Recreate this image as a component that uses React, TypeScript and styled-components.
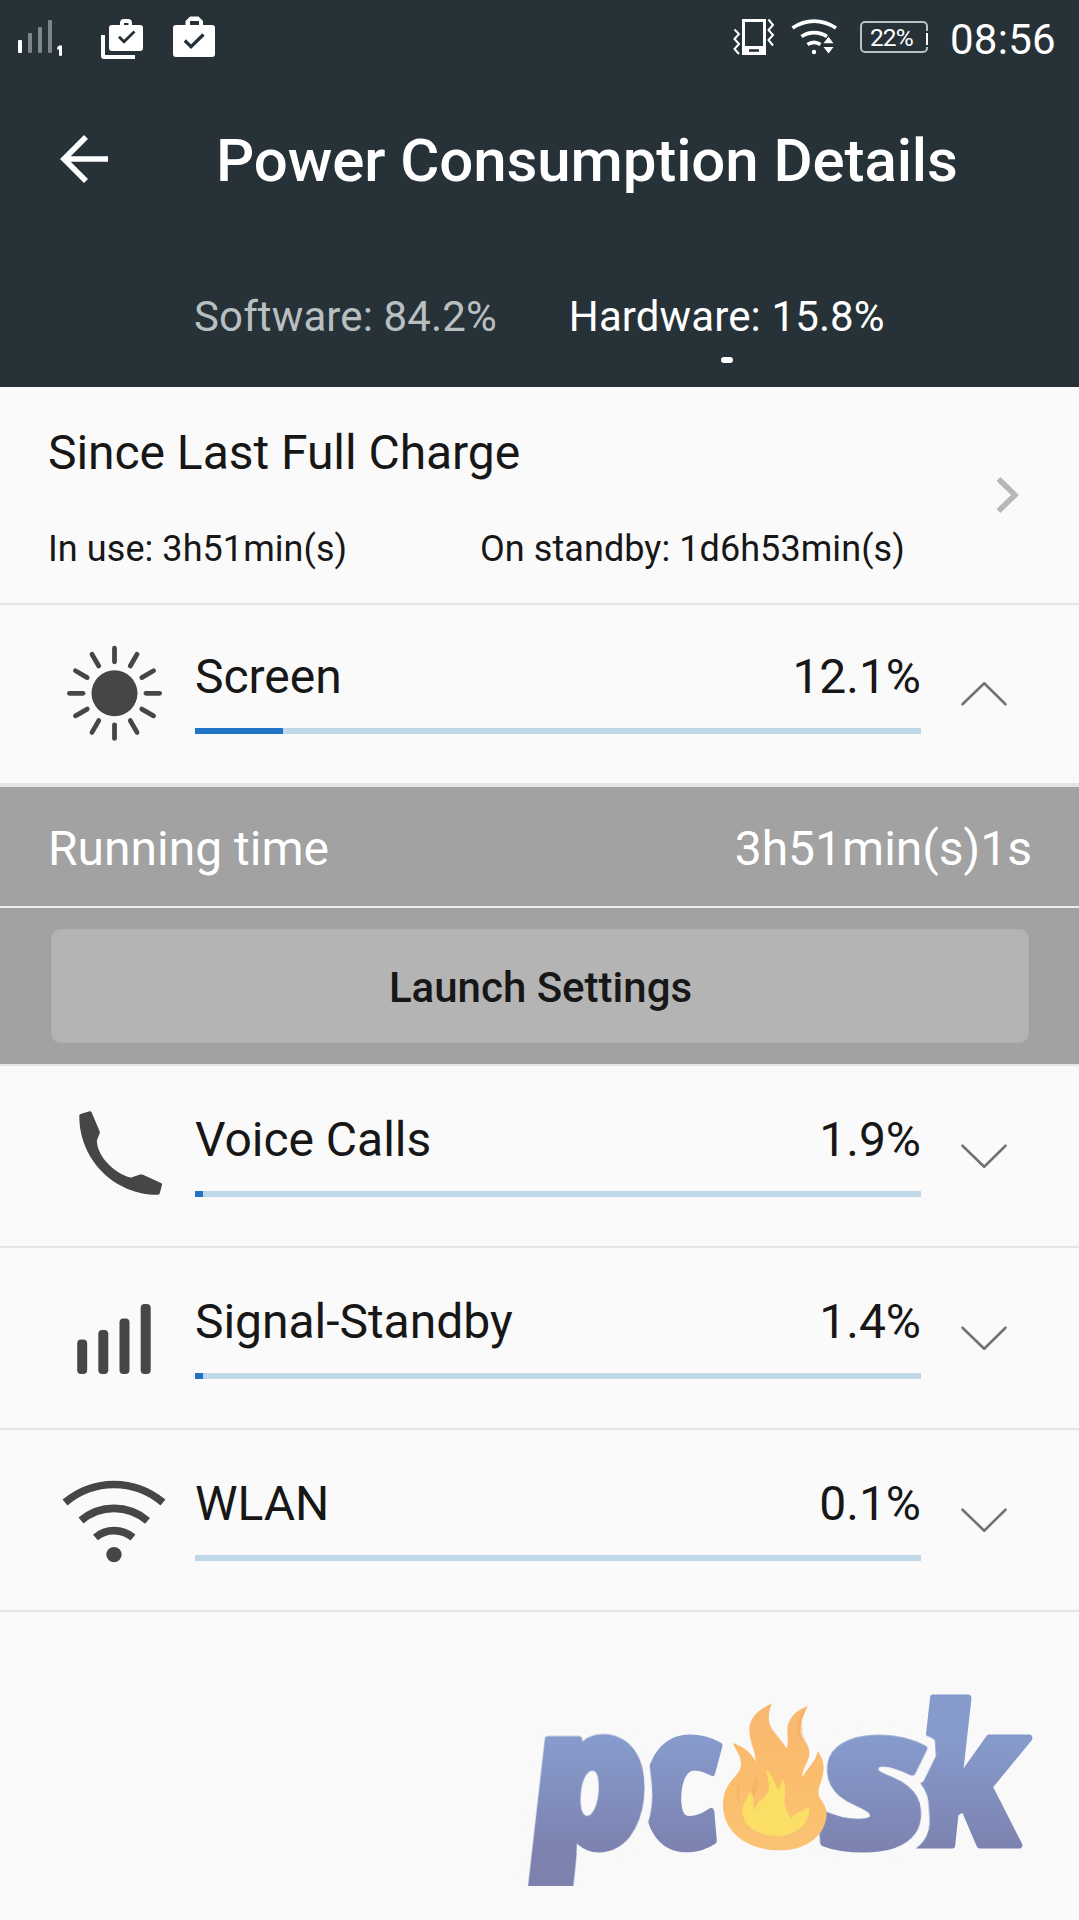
import React from "react";
import styled, { createGlobalStyle } from "styled-components";

const GlobalStyle = createGlobalStyle`
  * { box-sizing: border-box; }
  body { margin: 0; background: #fafafa; font-family: Roboto, "Liberation Sans", sans-serif; color: #171717; }
`;

const Screen = styled.main`
  width: 1079px;
  height: 1920px;
  display: flex;
  flex-direction: column;
  background: #fafafa;
  overflow: hidden;
`;

const Header = styled.header`
  height: 387px;
  background: #263238;
  color: #fff;
  display: flex;
  flex-direction: column;
`;

const StatusBar = styled.div`
  height: 76px;
  display: flex;
  justify-content: space-between;
  flex: none;
`;

const Clock = styled.span`
  font-size: 42px;
  line-height: 50px;
  letter-spacing: 0.3px;
  padding-top: 15px;
  margin-left: 22px;
`;

const StatusRight = styled.div`
  display: flex;
  padding-right: 23px;
`;

const Battery = styled.div`
  position: relative;
  width: 68px;
  height: 32px;
  margin: 21px 0 0 22px;
  border: 2px solid #b9c1c4;
  border-radius: 5px;
  display: flex;
  align-items: center;
  padding: 1px 0 0 8px;
  font-size: 24.5px;
  letter-spacing: -0.9px;

  &::after {
    content: "";
    position: absolute;
    right: -2px;
    top: 8px;
    width: 2px;
    height: 12px;
    background: #fff;
    border: solid #263238;
    border-width: 2px 0;
  }
`;

const TitleBar = styled.div`
  height: 168px;
  display: flex;
  flex: none;
`;

const BackIcon = styled.svg`
  width: 60px;
  height: 60px;
  margin: 53px 0 0 54px;
  flex: none;
`;

const Title = styled.h1`
  margin: 50px 0 0 102px;
  font-size: 60px;
  line-height: 70px;
  font-weight: 500;
  letter-spacing: -0.1px;
  white-space: nowrap;
`;

const Tabs = styled.nav`
  display: flex;
  gap: 72px;
  padding: 48px 0 0 194px;
`;

const Tab = styled.div<{ $active?: boolean }>`
  display: flex;
  flex-direction: column;
  align-items: center;
  font-size: 42px;
  line-height: 50px;
  letter-spacing: 0.12px;
  white-space: nowrap;
  color: ${(p) => (p.$active ? "#fff" : "#b8bfc1")};
`;

const TabMark = styled.span`
  width: 12px;
  height: 6px;
  margin-top: 15px;
  border-radius: 3px;
  background: #fff;
`;

const Summary = styled.section`
  height: 216px;
  display: flex;
  justify-content: space-between;
  padding: 0 59px 0 48px;
`;

const SummaryTitle = styled.h2`
  margin: 38px 0 0;
  font-size: 48px;
  line-height: 56px;
  font-weight: 400;
  letter-spacing: -0.05px;
`;

const SummaryTimes = styled.div`
  display: grid;
  grid-template-columns: 432px auto;
  margin-top: 47px;
  font-size: 36px;
  line-height: 42px;
  letter-spacing: 0.07px;
  white-space: nowrap;
`;

const NextIcon = styled.svg`
  width: 24px;
  height: 38px;
  margin-top: 89px;
`;

const Row = styled.section<{ $topLine?: boolean }>`
  height: 182px;
  display: flex;
  flex: none;
  border-bottom: 2px solid #e5e5e5;
  box-shadow: ${(p) => (p.$topLine ? "inset 0 2px #e5e5e5" : "none")};
  padding-left: 60px;
`;

const RowIcon = styled.svg`
  width: 108px;
  height: 108px;
  margin-top: 36px;
  color: #464646;
`;

const RowBody = styled.div`
  width: 726px;
  margin-left: 27px;
`;

const RowLabels = styled.div`
  display: flex;
  justify-content: space-between;
  margin-top: 46px;
  font-size: 48px;
  line-height: 56px;
  letter-spacing: -0.03px;
`;

const Track = styled.div`
  height: 6px;
  margin-top: 23px;
  background: #bfd8e8;
`;

const Fill = styled.div`
  height: 100%;
  background: #1f74c5;
`;

const Toggle = styled.svg<{ $up?: boolean }>`
  width: 48px;
  height: 28px;
  margin: ${(p) => (p.$up ? 77 : 76)}px 0 0 39px;
  transform: ${(p) => (p.$up ? "scaleY(-1)" : "none")};
`;

const Details = styled.section`
  height: 281px;
  flex: none;
  border-top: 2px solid #e5e5e5;
  border-bottom: 2px solid #e5e5e5;
  background: #a2a2a2;
`;

const DetailLine = styled.div`
  height: 121px;
  display: flex;
  justify-content: space-between;
  padding: 34px 47px 0 48px;
  border-bottom: 2px solid #ededed;
  color: #fff;
  font-size: 48px;
  line-height: 56px;
`;

const LaunchButton = styled.button`
  display: block;
  width: 978px;
  height: 114px;
  margin: 21px 0 0 51px;
  padding: 3px 0 0 1px;
  border: 0;
  border-radius: 10px;
  background: #b4b4b4;
  box-shadow: inset 0 0 0 1px #b0b0b0;
  color: #171717;
  font: 500 42px/50px Roboto, "Liberation Sans", sans-serif;
`;

const LogoArea = styled.footer`
  height: 308px;
  padding-left: 490px;
`;

const rays = Array.from({ length: 12 }, (_, i) => i * 30);

const SunIcon = () => (
  <RowIcon viewBox="0 0 108 108" fill="currentColor">
    <circle cx="54.5" cy="54.3" r="23" />
    {rays.map((a) => (
      <path key={a} d="M54.5 22.8V9.2" stroke="currentColor" strokeWidth="4.800" strokeLinecap="round" transform={`rotate(${a} 54.5 54.3)`} />
    ))}
  </RowIcon>
);

const PhoneIcon = () => (
  <RowIcon viewBox="0 0 108 108" fill="currentColor">
    <path d="M19.300 13.500Q19.500 12.300 20.700 12L29.500 9.200Q30.900 9 31.600 10.300L39.700 29.500Q40 30.500 39.600 31.500L37 38Q36.600 40 37.400 43.500C41 58 55 71 70.500 75.600Q71.600 75.700 72.700 75L80 72.600Q81.500 72.200 83 72.800L101 81Q102.500 81.500 102 83L99.700 91.500Q99.200 92.800 97.500 92.800C55 93 19 58 19.300 13.500Z" />
  </RowIcon>
);

const SignalIcon = () => (
  <RowIcon viewBox="0 0 108 108" fill="currentColor">
    <rect x="17.200" y="55.500" width="10" height="34.500" rx="4" />
    <rect x="38.300" y="46" width="10" height="44" rx="4" />
    <rect x="59.500" y="34.500" width="10" height="55.500" rx="4" />
    <rect x="80.700" y="20" width="10" height="70" rx="4" />
  </RowIcon>
);

const WlanIcon = () => (
  <RowIcon viewBox="0 0 108 108" fill="none" stroke="currentColor" strokeWidth="7.600">
    <path d="M5 36.500C34 12.500 74 12.500 103 36.500" />
    <path d="M21 54.500C40 38.300 68 38.300 87.500 54.800" />
    <path d="M35.500 71.500C46 62.300 62 62.300 73 71.500" />
    <circle cx="54" cy="88.600" r="7.700" fill="currentColor" stroke="none" />
  </RowIcon>
);

type Item = { name: string; percent: string; fill: number; icon: React.ReactNode; open?: boolean };

const screenItem: Item = { name: "Screen", percent: "12.1%", fill: 88, icon: <SunIcon />, open: true };
const otherItems: Item[] = [
  { name: "Voice Calls", percent: "1.9%", fill: 8, icon: <PhoneIcon /> },
  { name: "Signal-Standby", percent: "1.4%", fill: 8, icon: <SignalIcon /> },
  { name: "WLAN", percent: "0.1%", fill: 0, icon: <WlanIcon /> },
];

const UsageRow = ({ item }: { item: Item }) => (
  <Row $topLine={item.open}>
    {item.icon}
    <RowBody>
      <RowLabels>
        <span>{item.name}</span>
        <span>{item.percent}</span>
      </RowLabels>
      <Track>
        <Fill style={{ width: item.fill }} />
      </Track>
    </RowBody>
    <Toggle $up={item.open} viewBox="0 0 48 28" fill="none" stroke="#737373" strokeWidth="2.600" strokeLinecap="round" strokeLinejoin="round">
      <path d="M2.500 3.700L24.200 24.700L45.500 3.700" />
    </Toggle>
  </Row>
);

const StatusLeftIcons = () => (
  <svg width="230" height="76" viewBox="0 0 230 76" fill="#fff">
    <rect x="18" y="40" width="4" height="13" rx="1" />
    <g fill="#7d8588">
      <rect x="28" y="33" width="4" height="20" rx="1" />
      <rect x="38" y="27" width="4" height="26" rx="1" />
      <rect x="48" y="20" width="4" height="33" rx="1" />
    </g>
    <path d="M59 45.500h3v10.300h-3v-6.300h-1.800v-2z" />
    <path d="M101 35h4v20h30v4h-31q-3 0-3-3z" />
    <path fillRule="evenodd" d="M112 25h8v-2q0-4 4-4h4q4 0 4 4v2h8q3 0 3 3v20q0 3-3 3h-28q-3 0-3-3v-20q0-3 3-3zM124 23v2h4.500v-2z" />
    <path fillRule="evenodd" d="M176 25h9.500v-4l4.500-4.500h8.500l4.500 4.500v4h9q3 0 3 3v26q0 3-3 3h-36q-3 0-3-3v-26q0-3 3-3zM190 21v4h9v-4z" />
    <g fill="none" stroke="#263238" strokeWidth="2.800">
      <path d="M119 36.800l5 5L134.500 31.500" />
      <path strokeWidth="3.300" d="M184.800 40.500l6.200 6.200L203.500 34.500" />
    </g>
  </svg>
);

const VibrateIcon = () => (
  <svg width="57" height="76" viewBox="733 0 57 76" fill="none" stroke="#fff">
    <rect x="743.500" y="20.500" width="21" height="33" strokeWidth="3" />
    <path d="M742 46h24v9h-24z" fill="#fff" stroke="none" />
    <path d="M749 50.500h10" stroke="#263238" strokeWidth="2.600" />
    <path d="M734.500 29.500l4.500 4.500-4.500 5 4.500 5-4.500 5 4.500 5M768.500 19.500l4.500 5.500-4.500 5 4.500 5-4.500 5 4.500 5.500" strokeWidth="2" />
  </svg>
);

const StatusWifiIcon = () => (
  <svg width="48" height="76" viewBox="790 0 48 76" fill="none" stroke="#fff" strokeWidth="3.600">
    <path d="M792.500 28C806 18.800 822 18.800 836 28" />
    <path d="M801.500 36.500C809 31.300 819 31.300 827 36.500" />
    <path d="M807.500 44.500C811.500 41.800 816.500 41.800 820.500 44.500" />
    <circle cx="814" cy="52" r="2.200" fill="#fff" stroke="none" />
    <path d="M828.500 36.800l5 6.500h-10zM828.500 53.500l5-6.500h-10z" fill="#fff" stroke="none" />
  </svg>
);

const Flame = () => (
  <g transform="translate(715 1690) scale(0.33333)">
    <path
      fill="url(#flame)"
      d="M171 40C128 60 102 85 103 122C104 158 122 182 122 215C108 187 86 170 54 159C62 182 78 195 78 222C78 262 24 270 24 345C24 425 95 481 193 481C282 481 335 430 335 368C335 345 310 325 310 308C310 290 326 262 326 234C326 215 319 198 308 183C303 215 279 231 262 262C260 235 284 215 283 190C282 162 257 150 256 124C255 95 269 70 278 48C240 62 217 88 217 120C217 140 221 158 215 175C200 148 166 120 162 95C160 72 163 60 171 40Z"
    />
    <path
      fill="#f4ab60"
      opacity="0.500"
      d="M278 48C254 82 262 95 262 125C264 150 284 160 283 190C279 160 248 150 244 120C242 90 260 75 278 48ZM72 275C78 310 66 318 80 345C62 325 60 302 72 275ZM125 260C142 282 120 300 118 325C106 300 110 282 125 260Z"
    />
    <path
      fill="#fade66"
      d="M154 238C156 270 166 280 160 302C152 326 122 332 119 363C111 350 123 323 103 306C98 330 80 340 82 367C86 412 132 438 184 438C240 438 285 405 283 351C265 363 244 364 228 384C215 365 204 345 210 315C212 295 211 281 203 268C200 282 193 288 192 301C178 281 173 254 154 238Z"
    />
  </g>
);

const Logo = () => (
  <svg width="589" height="308" viewBox="490 1612 589 308">
    <defs>
      <linearGradient id="ink" gradientUnits="userSpaceOnUse" x1="0" x2="0" y1="-110" y2="10">
        <stop offset="0" stopColor="#869bcc" />
        <stop offset="1" stopColor="#7c81ae" />
      </linearGradient>
      <linearGradient id="flame" x1="0" x2="0" y1="0" y2="1">
        <stop offset="0" stopColor="#f9b772" />
        <stop offset="0.500" stopColor="#fbbd6c" />
        <stop offset="1" stopColor="#fac374" />
      </linearGradient>
      <filter id="halo" filterUnits="userSpaceOnUse" x="-40" y="-180" width="220" height="260" colorInterpolationFilters="sRGB">
        <feMorphology in="SourceAlpha" operator="dilate" radius="7" result="grown" />
        <feFlood floodColor="#f9f9f9" />
        <feComposite in2="grown" operator="in" result="edge" />
        <feMerge>
          <feMergeNode in="edge" />
          <feMergeNode in="SourceGraphic" />
        </feMerge>
      </filter>
      <clipPath id="stem">
        <rect x="490" y="1664" width="579" height="222" rx="6" />
      </clipPath>
    </defs>
    <rect x="490" y="1664" width="578" height="246" fill="#f9f9f9" />
    <g fill="url(#ink)" stroke="url(#ink)" strokeWidth="7" strokeLinejoin="round" fontFamily='"Open Sans", Lato, sans-serif' fontWeight="800" fontStyle="italic" fontSize="197">
      <text transform="translate(915 1845) skewX(5) scale(0.935 0.983)">k</text>
      <text transform="translate(821 1847) skewX(4) scale(1.150 0.983)" filter="url(#halo)">s</text>
      <text transform="translate(645 1847) skewX(5) scale(0.820 0.983)">c</text>
      <g clipPath="url(#stem)">
        <text transform="translate(534 1847) skewX(6) scale(1.020 0.983)" filter="url(#halo)">p</text>
      </g>
    </g>
    <Flame />
  </svg>
);

export default function App() {
  return (
    <>
      <GlobalStyle />
      <Screen>
        <Header>
          <StatusBar>
            <StatusLeftIcons />
            <StatusRight>
              <VibrateIcon />
              <StatusWifiIcon />
              <Battery>22%</Battery>
              <Clock>08:56</Clock>
            </StatusRight>
          </StatusBar>
          <TitleBar>
            <BackIcon viewBox="0 0 60 60" fill="none" stroke="#fff" strokeWidth="5.600">
              <path d="M54 30H10M32 8L10 30L32 52" />
            </BackIcon>
            <Title>Power Consumption Details</Title>
          </TitleBar>
          <Tabs>
            <Tab>Software: 84.2%</Tab>
            <Tab $active>
              Hardware: 15.8%
              <TabMark />
            </Tab>
          </Tabs>
        </Header>
        <Summary>
          <div>
            <SummaryTitle>Since Last Full Charge</SummaryTitle>
            <SummaryTimes>
              <span>In use: 3h51min(s)</span>
              <span>On standby: 1d6h53min(s)</span>
            </SummaryTimes>
          </div>
          <NextIcon viewBox="0 0 24 38" fill="none" stroke="#b7b7b7" strokeWidth="5.500">
            <path d="M2.500 3L19 19L2.500 35" />
          </NextIcon>
        </Summary>
        <UsageRow item={screenItem} />
        <Details>
          <DetailLine>
            <span>Running time</span>
            <span>3h51min(s)1s</span>
          </DetailLine>
          <LaunchButton>Launch Settings</LaunchButton>
        </Details>
        {otherItems.map((item) => (
          <UsageRow key={item.name} item={item} />
        ))}
        <LogoArea>
          <Logo />
        </LogoArea>
      </Screen>
    </>
  );
}
